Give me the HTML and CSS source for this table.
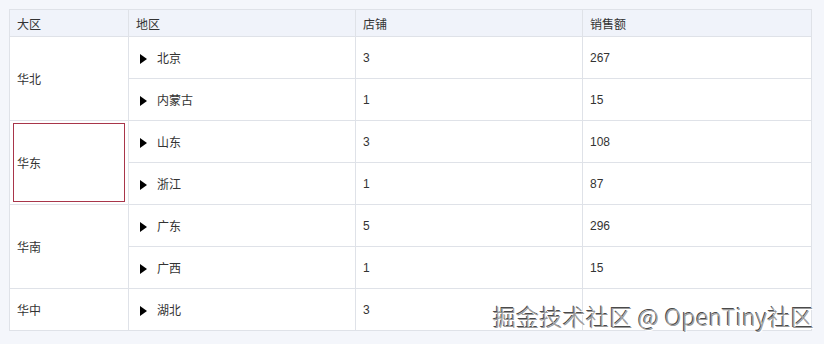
FILE: index.html
```html
<!DOCTYPE html>
<html lang="zh">
<head>
<meta charset="utf-8">
<link rel="stylesheet" href="styles.css">
</head>
<body>
<div class="page">
  <table class="grid">
    <colgroup>
      <col class="c1"><col class="c2"><col class="c3"><col class="c4">
    </colgroup>
    <thead>
      <tr><th>大区</th><th>地区</th><th>店铺</th><th>销售额</th></tr>
    </thead>
    <tbody>
      <tr><td rowspan="2">华北</td><td><span class="tri"></span>北京</td><td class="num">3</td><td class="num">267</td></tr>
      <tr><td><span class="tri"></span>内蒙古</td><td class="num">1</td><td class="num">15</td></tr>
      <tr><td rowspan="2" class="sel">华东</td><td><span class="tri"></span>山东</td><td class="num">3</td><td class="num">108</td></tr>
      <tr><td><span class="tri"></span>浙江</td><td class="num">1</td><td class="num">87</td></tr>
      <tr><td rowspan="2">华南</td><td><span class="tri"></span>广东</td><td class="num">5</td><td class="num">296</td></tr>
      <tr><td><span class="tri"></span>广西</td><td class="num">1</td><td class="num">15</td></tr>
      <tr><td>华中</td><td><span class="tri"></span>湖北</td><td class="num">3</td><td class="num"></td></tr>
    </tbody>
  </table>
  <div class="watermark">掘金技术社区 @ OpenTiny社区</div>
</div>
</body>
</html>
```
FILE: styles.css
```css
html, body {
  margin: 0;
  padding: 0;
  background: #f4f6fb;
}
.page {
  position: relative;
  width: 824px;
  height: 344px;
  padding: 9px 0 0 9px;
  box-sizing: border-box;
  font-family: "Liberation Sans", "Noto Sans CJK SC", sans-serif;
  font-size: 12px;
  color: #333;
}
.grid {
  border-collapse: collapse;
  table-layout: fixed;
  width: 802px;
  background: #fff;
}
.c1 { width: 119px; }
.c2 { width: 227px; }
.c3 { width: 227px; }
.c4 { width: 229px; }
.grid th, .grid td {
  border: 1px solid #dfe2e8;
  padding: 0 0 0 7px;
  text-align: left;
  font-weight: normal;
  vertical-align: middle;
}
.grid th {
  height: 26px;
  background: #f0f3fa;
  color: #333;
}
.grid td {
  height: 41px;
}
.tri {
  display: inline-block;
  width: 0;
  height: 0;
  border-top: 5px solid transparent;
  border-bottom: 5px solid transparent;
  border-left: 7px solid #000;
  margin: 0 10px 0 4px;
  vertical-align: -1px;
}
.sel {
  position: relative;
}
.sel::after {
  content: "";
  position: absolute;
  left: 3px;
  right: 3px;
  top: 2px;
  bottom: 2px;
  border: 1px solid #a8354a;
}
.watermark {
  position: absolute;
  right: 10px;
  top: 299px;
  font-family: "Noto Sans CJK SC", "Liberation Sans", sans-serif;
  font-size: 23px;
  font-weight: 300;
  letter-spacing: 0.3px;
  color: #9a9a9a;
  text-shadow: 1px 1px 0 #fff, -1px -1px 0 #4a4a4a;
  white-space: nowrap;
}
```
